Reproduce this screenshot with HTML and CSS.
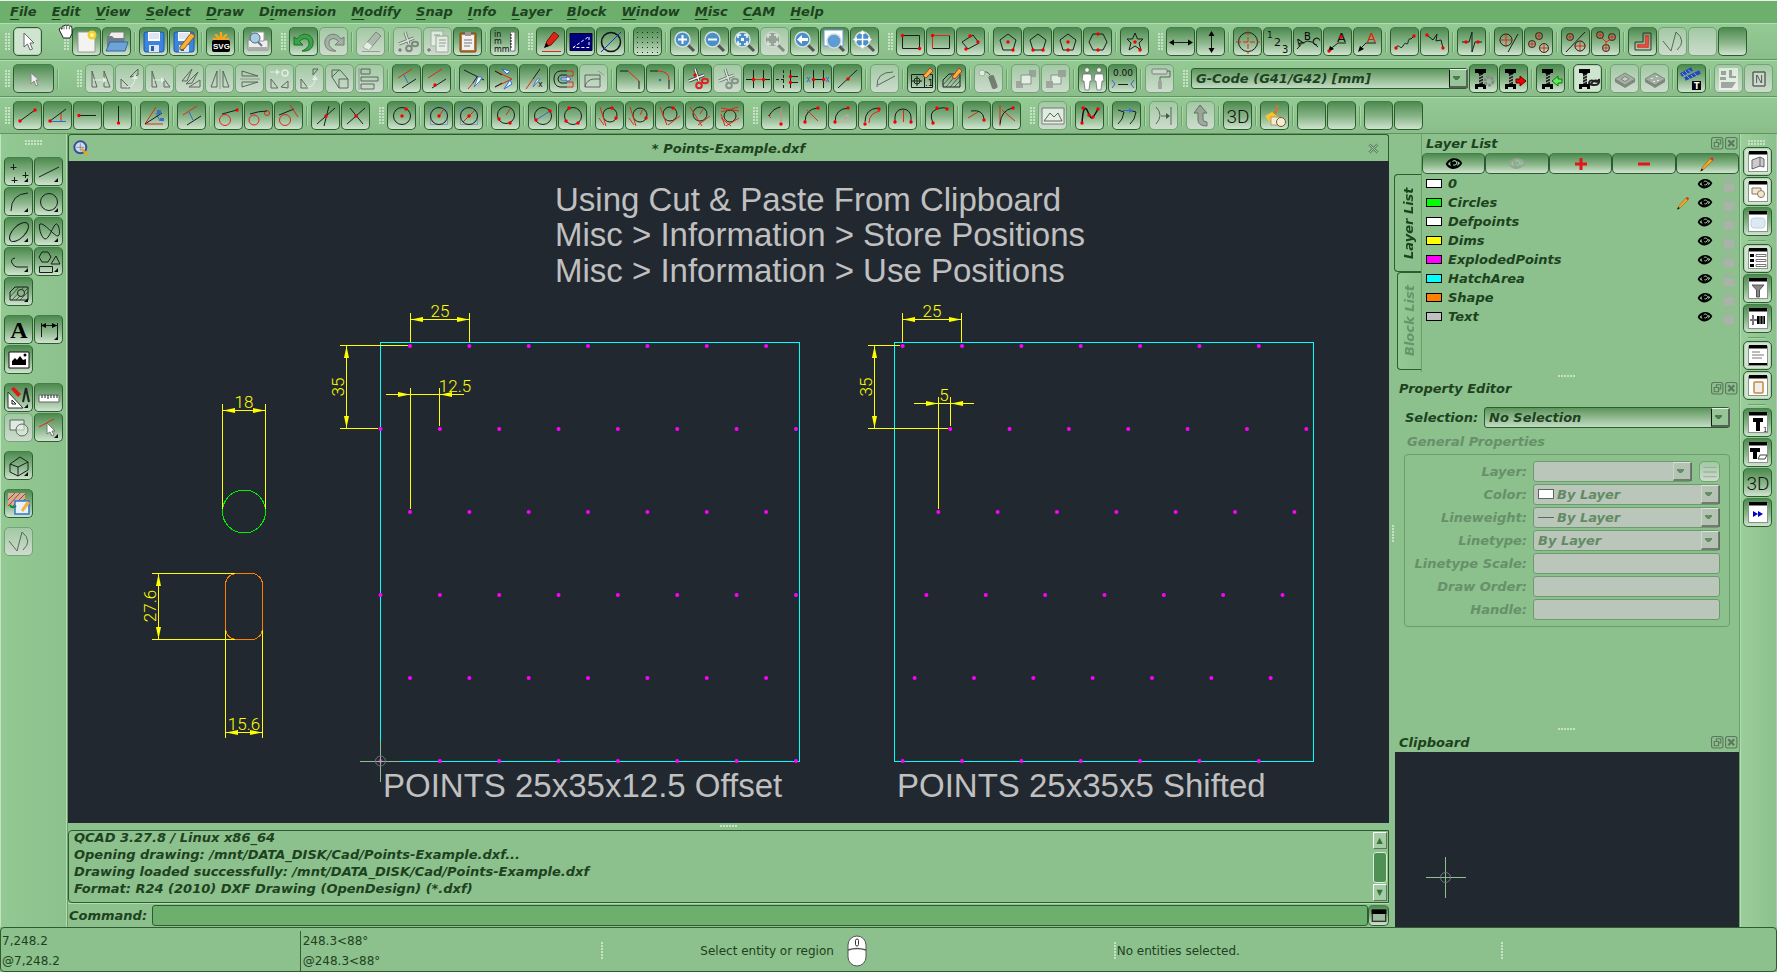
FILE: index.html
```html
<!DOCTYPE html>
<html lang="en">
<head>
<meta charset="utf-8">
<title>Points-Example.dxf - QCAD</title>
<link rel="stylesheet" href="styles.css">
</head>
<body>
<div class="app">
  <nav class="menubar">
    <a href="#"><u>F</u>ile</a><a href="#"><u>E</u>dit</a><a href="#"><u>V</u>iew</a><a href="#"><u>S</u>elect</a><a href="#"><u>D</u>raw</a><a href="#">D<u>i</u>mension</a><a href="#"><u>M</u>odify</a><a href="#"><u>S</u>nap</a><a href="#"><u>I</u>nfo</a><a href="#"><u>L</u>ayer</a><a href="#"><u>B</u>lock</a><a href="#"><u>W</u>indow</a><a href="#"><u>M</u>isc</a><a href="#"><u>C</u>AM</a><a href="#"><u>H</u>elp</a>
  </nav>
  <div class="toolbar" data-tools="# cursor= ## new open | save saveas | svg | print # undo redo! | eraser! | cut! copy! paste | units # pencil draft diameter | grid | zoomin zoomout zoomauto zoomsel! zoomprev zoomwin zoompan # rect1 rect2 rect3 | pent1 pent2 pent3 hexa | star # dimh dimv | center numbers textpath leader1 leader2 | poly1 poly2 | pulse | cross1 cross2 | cross3 cross4 | lshape vpath! blank! blank"></div>
  <div class="toolbar">
    <div class="tools" data-tools="# pick^ | ## mv1! rot1! mv2! fan! mirrorv! mirrorh! mrot! rot2! proj! align! | par1 par2 | trim1 trim2 trim3 offset scale! | bevel round | snip snip2! break1 break2 break3 divide | revarc! | edittext edithatch | explode! | front! back! | people decimals | roller! #"></div>
    <div class="combo combo-main"><select aria-label="Output format"><option>G-Code (G41/G42) [mm]</option></select></div>
    <div class="tools" data-tools="camgear camout | camin | camtool= | plate! plate2! | toolpath | sheet! nest!"></div>
  </div>
  <div class="toolbar" data-tools="# ln1 ln2 ln3 ln4 | bisect | par1 | tan1 tan2 tan3 | orth1 orth2 # ci1 | ci2 ci3 | ci4 | ci5 ci6 | tc1 tc2 tc3 tc4 tc5 # arc0 | arc1 arc2 arc3 arc4 | arc5 | arc6 arc7 # image! | spline | convert | mirror! | up! | three | clean | blank blank | blank blank"></div>

  <main class="body">
    <aside class="palette">
      <i class="grip-h"></i>
      <div class="pair" data-tools="pts, line, arc, circle, ellipse, bow, pline, shapes, hatch,"></div>
      <div class="pair" data-tools="text dimension, picture"></div>
      <div class="pair" data-tools="draw, measure order! select,"></div>
      <div class="pair" data-tools="cube,"></div>
      <div class="pair" data-tools="hatchsave"></div>
      <div class="pair" data-tools="vpath!"></div>
    </aside>

    <section class="document">
      <header class="doc-title"><span data-icon="doc"></span><b>* Points-Example.dxf</b><button class="plain" aria-label="Close document" data-icon="xmark"></button></header>
      <svg class="canvas" role="img" aria-label="Drawing">
        <g id="drawing" transform="translate(-68 -161)">
          <g class="title">
            <text x="555" y="211">Using Cut &amp; Paste From Clipboard</text>
            <text x="555" y="246">Misc &gt; Information &gt; Store Positions</text>
            <text x="555" y="282">Misc &gt; Information &gt; Use Positions</text>
            <text x="383" y="797">POINTS 25x35x12.5 Offset</text>
            <text x="897" y="797">POINTS 25x35x5 Shifted</text>
          </g>
          <path class="area" d="M380.5 342.5H799.5V761.5H380.5ZM894.5 342.5H1313.5V761.5H894.5Z"/>
          <circle class="hole" cx="244" cy="511.500" r="21.5"/>
          <rect class="slot" x="225.5" y="573.5" width="37" height="66" rx="11"/>
          <path class="dim" d="M222.5 404V509M265.5 404V509M222 410.5H265M152 573.5H235M152 639.5H235M158.5 573V639M225.5 630V738M262.5 630V738M225 732.5H262
            M410.5 313V342M469.5 313V342M410 319.5H469M340 345.5H408M340 428.5H378M346.5 346V428M386 394.5H464M410.5 388V509M439.5 388V426
            M902.5 313V342M961.5 313V342M902 319.5H961M868 345.5H900M868 428.5H948M874.5 346V428M914 403.5H974M938.5 397V509M950.5 397V426"/>
          <g id="arrows" class="arrow"></g>
          <g class="dimtext">
            <text x="244" y="408">18</text><text x="244" y="730">15.6</text>
            <text x="440" y="317">25</text><text x="455" y="392">12.5</text>
            <text x="932" y="317">25</text><text x="944" y="401">5</text>
            <text transform="translate(156 606) rotate(-90)">27.6</text>
            <text transform="translate(344 387) rotate(-90)">35</text>
            <text transform="translate(872 387) rotate(-90)">35</text>
          </g>
          <g id="points" class="point"></g>
          <path class="bgline" d="M381 761.5H401M380.5 742V761"/>
          <path class="axis" d="M360 761.5H401M380.5 741V782"/>
          <circle class="origin" cx="380.5" cy="761" r="5"/>
        </g>
      </svg>
      <i class="splitter"></i>
      <div class="log">
        <p>QCAD 3.27.8 / Linux x86_64<br>Opening drawing: /mnt/DATA_DISK/Cad/Points-Example.dxf...<br>Drawing loaded successfully: /mnt/DATA_DISK/Cad/Points-Example.dxf<br>Format: R24 (2010) DXF Drawing (OpenDesign) (*.dxf)</p>
        <div class="scrollbar"><button aria-label="Scroll up">▲</button><span class="thumb"></span><button aria-label="Scroll down">▼</button></div>
      </div>
      <div class="command"><label for="cmd">Command:</label><input id="cmd" type="text"><button class="tool small" aria-label="Toggle command window" data-icon="cmdwin"></button></div>
    </section>

    <aside class="docks">
      <section class="layers">
        <div class="tabs"><button class="tab active">Layer List</button><button class="tab">Block List</button></div>
        <div class="layer-panel">
          <header class="dock-title"><b>Layer List</b><button class="plain" aria-label="Float" data-icon="float"></button><button class="plain" aria-label="Close" data-icon="close"></button></header>
          <div class="layer-tools">
            <button class="tool" aria-label="Show all layers" data-icon="eye"></button><button class="tool" aria-label="Hide all layers" data-icon="eyegrey"></button><button class="tool" aria-label="Add layer" data-icon="plus"></button><button class="tool" aria-label="Remove layer" data-icon="minus"></button><button class="tool" aria-label="Edit layer" data-icon="crayon"></button>
          </div>
          <ul class="layer-list" id="layers"></ul>
        </div>
      </section>
      <i class="splitter dock-split"></i>
      <section class="properties">
        <header class="dock-title"><b>Property Editor</b><button class="plain" aria-label="Float" data-icon="float"></button><button class="plain" aria-label="Close" data-icon="close"></button></header>
        <div class="selection"><label for="sel">Selection:</label><div class="combo"><select id="sel"><option>No Selection</option></select></div></div>
        <fieldset disabled>
          <legend>General Properties</legend>
          <div class="fields">
            <label for="f1">Layer:</label><div class="with-button"><div class="combo off"><select id="f1"><option></option></select></div><button class="tool small" aria-label="Layer menu" data-icon="lines"></button></div>
            <label for="f2">Color:</label><div class="combo off lead"><i class="swatch"></i><select id="f2"><option>By Layer</option></select></div>
            <label for="f3">Lineweight:</label><div class="combo off lead"><i class="stroke"></i><select id="f3"><option>By Layer</option></select></div>
            <label for="f4">Linetype:</label><div class="combo off"><select id="f4"><option>By Layer</option></select></div>
            <label for="f5">Linetype Scale:</label><input id="f5" type="text">
            <label for="f6">Draw Order:</label><input id="f6" type="text">
            <label for="f7">Handle:</label><input id="f7" type="text">
          </div>
        </fieldset>
        <i class="grip-v side"></i>
      </section>
      <i class="splitter dock-split"></i>
      <section class="clipboard">
        <header class="dock-title"><b>Clipboard</b><button class="plain" aria-label="Float" data-icon="float"></button><button class="plain" aria-label="Close" data-icon="close"></button></header>
        <svg class="clip-view" role="img" aria-label="Clipboard preview"><path class="axis" d="M31 125.5H71M50.5 105V146"/><circle class="origin" cx="50.5" cy="125.5" r="5"/></svg>
      </section>
    </aside>

    <aside class="windows">
      <i class="grip-h"></i>
      <div class="stack" data-tools="w-lib= w-block= w-clip | w-list= w-funnel w-bolt | w-text= w-paste= | w-cam1 w-cam2 three w-next"></div>
    </aside>
  </main>

  <footer class="status">
    <div class="coords"><span>7,248.2</span><span>@7,248.2</span></div>
    <div class="coords polar"><span>248.3&lt;88°</span><span>@248.3&lt;88°</span></div>
    <div class="hint"><i class="grip-v"></i><span>Select entity or region</span><span data-icon="mouse"></span></div>
    <div class="cell"><i class="grip-v"></i><span>No entities selected.</span></div>
    <div class="cell"><i class="grip-v"></i></div>
  </footer>
  <span class="hand" data-icon="hand"></span>
</div>
<script src="app.js"></script>
</body>
</html>
```

FILE: styles.css
```css
* { box-sizing: border-box; }
body {
  margin: 0;
  background: #8cc08c;
  color: #1d4220;
  font: italic bold 13px/17px "DejaVu Sans", sans-serif;
}
button, select, input { font: inherit; color: inherit; margin: 0; }
button { padding: 0; }
a { color: inherit; text-decoration: none; }
i { font-style: normal; }

.app {
  position: relative;
  display: grid;
  grid-template-rows: 23px 37px 37px 37px minmax(0, 1fr) 45px;
  height: 100vh;
  overflow: hidden;
}

.menubar {
  display: flex;
  align-items: flex-start;
  padding: 2px 0 0 2px;
  background: #6db06d;
  border-top: 1px solid #e9f3e9;
}
.menubar a { padding: 0 7px 0 8px; }
.menubar u { text-underline-offset: 3px; text-decoration-thickness: 1px; }

/* toolbars */
.toolbar {
  display: flex;
  align-items: flex-start;
  padding-top: 3px;
  border-top: 1px solid #b2dcb2;
  border-bottom: 1px solid #5f955f;
  background: linear-gradient(#94ca94, #8abd8a);
}
.tools { display: flex; }
.tool {
  display: flex;
  flex: none;
  align-items: center;
  justify-content: center;
  width: 29px;
  height: 29px;
  margin-right: 1px;
  position: relative;
  border: 1px solid #2c5c30;
  border-top-color: #43804a;
  border-radius: 5px;
  background: linear-gradient(#4d8a4f, #8ab68a 55%, #cfe3cf);
}
.tool svg { width: 24px; height: 24px; flex: none; overflow: visible; }
.tool.checked { background: #d0e5d0; border-color: #2c5c30; box-shadow: inset 0 0 0 1px #b4cfb4; }
.tool:disabled { background: linear-gradient(#a2c9a3, #cddccd); border-color: #74a377; }
.tool:disabled svg { filter: grayscale(1); opacity: .6; }
.tool.wide { width: 41px; background: linear-gradient(#4d8a4f, #b9d4b9); }
.tool.flyout::after {
  content: "";
  position: absolute;
  right: 4px;
  bottom: 3px;
  border: 2px solid #0a0f0a;
  border-left-color: transparent;
  border-top-color: transparent;
}
.sep { flex: none; width: 7px; height: 20px; margin-top: 5px; background: linear-gradient(90deg, #6da26d 1px, #a9d5a9 1px 2px, transparent 2px) 2px 0 no-repeat; }
.grip { flex: none; width: 16px; height: 29px; padding: 6px 0 0 8px; }
.grip::before, .grip-h::before, .grip-v::before {
  content: "";
  display: block;
  width: 6px;
  height: 18px;
  background: radial-gradient(circle at 1px 1px, #c8e2c8 1px, transparent 1px) 0 0 / 3px 3px;
}
.grip:first-child { width: 13px; padding-left: 5px; }
.grip.far { width: 29px; padding-left: 21px; }
.tools .sep + .grip.far { width: 23px; padding-left: 15px; }
.tools .grip:last-child { width: 16px; }

.k { stroke: #15201a; fill: none; }
.r { stroke: #e02818; fill: none; }
.b { stroke: #3565d8; fill: none; }
.g { stroke: #777; fill: none; }
.w { stroke: #fff; fill: none; }
.K { fill: #000; } .R { fill: #e01010; } .B { fill: #3b6fc9; } .G { fill: #888; } .W { fill: #fff; }
.dot { fill: #f40000; }
.it { fill: #111; font: 9px "DejaVu Sans", sans-serif; }

/* combo boxes and text fields */
.combo { position: relative; min-width: 0; height: 21px; }
.combo select {
  appearance: none;
  display: block;
  width: 100%;
  height: 100%;
  padding: 0 16px 0 4px;
  border: 1px solid #2c5c30;
  border-radius: 3px;
  background: linear-gradient(#5c955c, #c3dcc3);
}
.combo::after {
  content: "";
  position: absolute;
  right: 0;
  top: 1px;
  bottom: 1px;
  width: 16px;
  border: 2px solid #5a615a;
  border-top: 1px solid #e8f0e8;
  border-left: 1px solid #101510;
  background: linear-gradient(#4b7c4b, #4b7c4b) 3px 6px / 7px 2px no-repeat, linear-gradient(#4b7c4b, #4b7c4b) 4px 8px / 5px 1px no-repeat, linear-gradient(#4b7c4b, #4b7c4b) 5px 9px / 3px 1px no-repeat, #97c597;
  pointer-events: none;
}
.combo-main { width: 277px; margin: 4px 1px 0 0; height: 21px; }
.toolbar .combo-main { flex: 0 0 277px; }
.combo.off select, fieldset input { background: #bac6ba; border: 1px solid #6e9a70; border-radius: 3px; opacity: 1; color: #628a64; }
.combo.off::after { background-color: #b4c3b4; border-left-color: #d4ddd4; opacity: .75; }
.combo.lead select { padding-left: 23px; }
.combo .swatch { position: absolute; left: 5px; top: 5px; width: 16px; height: 10px; background: #fff; border: 1px solid #5c685c; }
.combo .stroke { position: absolute; left: 5px; top: 10px; width: 16px; height: 1px; background: #5c685c; }

/* body */
.body { display: grid; grid-template-columns: 68px minmax(0, 1fr) 351px 37px; min-height: 0; }
.palette { padding: 6px 3px 6px 4px; border-right: 1px solid #6a9f6a; box-shadow: inset -1px 0 #b2dcb2, inset 1px 0 #c2e2c2; background: linear-gradient(90deg, #93c993, #8cc08c); }
.grip-h { display: block; height: 6px; }
.grip-h::before { width: 18px; height: 6px; margin: 0 auto; }
.palette .pair { display: flex; flex-wrap: wrap; padding-top: 8px; }
.palette .tool { margin-bottom: 1px; }
.palette .pair:first-of-type { padding-top: 0; margin-top: 11px; }

.document { display: flex; flex-direction: column; min-width: 0; min-height: 0; }
.doc-title { display: flex; align-items: center; justify-content: space-between; height: 27px; padding: 0 6px 0 4px; border: 1px solid #2c5c30; border-width: 1px 1px 0; border-radius: 3px 3px 0 0; }
.doc-title svg { display: block; width: 16px; height: 16px; }
.plain { border: 0; background: none; width: 14px; height: 14px; }
.plain svg { display: block; width: 13px; height: 13px; }
.doc-title .plain svg { width: 11px; height: 11px; }
.canvas { flex: 1; min-height: 0; width: 100%; background: #222830; }
.title text { font: 33px "Liberation Sans", sans-serif; fill: #c0c0c0; }
.area { fill: none; stroke: #00ffff; shape-rendering: crispEdges; }
.hole { fill: none; stroke: #00f000; shape-rendering: crispEdges; }
.slot { fill: none; stroke: #ff7f00; shape-rendering: crispEdges; }
.dim { fill: none; stroke: #ffff00; shape-rendering: crispEdges; }
.arrow { fill: #ffff00; }
.point { fill: #ff00ff; }
.dimtext text { fill: #ffff00; font: 300 17px Roboto, "Liberation Sans", sans-serif; text-anchor: middle; }
.bgline { stroke: #222830; fill: none; }
.axis { stroke: #8cc08c; fill: none; shape-rendering: crispEdges; }
.origin { stroke: #70757a; fill: none; }

.splitter { display: flex; flex: none; justify-content: center; align-items: center; height: 7px; }
.splitter::before { content: ""; width: 18px; height: 3px; background: radial-gradient(circle at 1px 1px, #c8e2c8 1px, transparent 1px) 0 0 / 3px 3px; }
.log { display: flex; flex: none; justify-content: space-between; height: 73px; border: 1px solid #2c5c30; border-radius: 4px 0 0 4px; }
.log p { margin: -2px 0 0; padding-left: 5px; }
.scrollbar { display: flex; flex-direction: column; align-items: center; width: 16px; padding: 1px 1px 1px 0; }
.scrollbar button { width: 14px; height: 17px; flex: none; border: 1px solid #667066; border-top-color: #fff; border-left-color: #fff; background: #a3cda3; color: #3f6b40; font: 8px/12px "DejaVu Sans", sans-serif; }
.thumb { width: 14px; height: 31px; margin: auto 0 1px; border: 1px solid #dcecdc; border-radius: 3px; background: #4f9154; }
.command { display: flex; flex: none; align-items: center; height: 24px; border-top: 1px solid #b2dcb2; }
.command label { padding: 0 5px 0 1px; }
.command input { flex: 1; min-width: 0; height: 21px; border: 1px solid #2c5c30; border-radius: 3px; background: #6db06d; }
.tool.small { width: 21px; height: 21px; margin: 0; }
.tool.small svg { width: 16px; height: 16px; }

/* docks */
.docks { display: flex; flex-direction: column; min-height: 0; padding-left: 6px; border-right: 1px solid #6a9f6a; }
.layers { display: flex; height: 238px; flex: none; }
.tabs { display: flex; flex-direction: column; align-items: flex-end; width: 27px; padding-top: 40px; border-right: 1px solid #6a9f6a; }
.tab {
  width: 24px;
  height: 98px;
  flex: none;
  border: 1px solid #2c5c30;
  border-width: 1px 1px 1px 0;
  border-radius: 0 4px 4px 0;
  background: linear-gradient(270deg, #93c993, #8cc08c);
  writing-mode: vertical-rl;
  transform: rotate(180deg);
  color: #67956a;
}
.tab.active { width: 27px; color: #1d4220; background: #8cc08c; }
.layer-panel { flex: 1; min-width: 0; }
.dock-title { display: flex; align-items: center; height: 19px; padding-left: 4px; }
.dock-title b { flex: 1; }
.layer-tools { display: flex; }
.layer-tools .tool { flex: 1; width: auto; height: 21px; margin-right: 0; }
.layer-tools svg { width: 18px; height: 18px; }
.layer-list { list-style: none; margin: 0; padding: 0; }
.layer-list li { display: grid; grid-template-columns: 22px 1fr 22px 24px 18px; align-items: center; height: 19px; padding-left: 4px; }
.layer-list svg { display: block; width: 16px; height: 16px; }
.layer-list i { width: 16px; height: 9px; border: 1px solid #000; }
.dock-split { height: 8px; }
.properties { position: relative; flex: 1; min-height: 0; }
.properties .dock-title { height: 17px; }
.selection { display: grid; grid-template-columns: 79px 1fr; align-items: center; padding: 10px 9px 0 10px; }
fieldset { margin: 26px 9px 0; padding: 6px 9px; border: 1px solid #6e9a70; border-radius: 4px; color: #67906a; }
fieldset legend { float: left; width: 100%; height: 0; margin-top: -28px; padding: 0; text-indent: -7px; overflow: visible; }
.fields { clear: both; display: grid; grid-template-columns: 113px 1fr; column-gap: 6px; row-gap: 2px; align-items: center; text-align: right; }
.fields input { width: 100%; height: 21px; }
.with-button { display: grid; grid-template-columns: 1fr 21px; gap: 7px; }
.grip-v::before { width: 3px; height: 18px; }
.side { position: absolute; left: -3px; top: 145px; }
.clipboard { display: flex; flex-direction: column; height: 194px; flex: none; }
.clip-view { flex: 1; width: 100%; min-height: 0; background: #222830; }

.windows { padding: 6px 0 0 2px; background: linear-gradient(90deg, #9acd9a, #8cc08c); border-left: 1px solid #b2dcb2; border-right: 1px solid #b8c4b8; }
.windows .grip-h { margin: 0 6px 0 0; }
.stack { display: flex; flex-direction: column; margin-top: 1px; }
.stack .tool { margin: 0 0 1px; }
.stack .sep { width: 18px; height: 7px; margin: 0 0 0 5px; background: linear-gradient(#6da26d 1px, #a9d5a9 1px 2px, transparent 2px) 0 3px no-repeat; }

/* status bar */
.status { display: grid; grid-template-columns: 300fr 301fr 513fr 388fr 275fr; padding: 3px 0 1px; border: 1px solid #2c5c30; border-radius: 4px; font: 12px/20px "DejaVu Sans", sans-serif; }
.coords { display: flex; flex-direction: column; padding-left: 1px; border-right: 1px solid #2f5f32; }
.coords.polar { border: 0; padding-left: 2px; }
.hint, .cell { display: flex; align-items: center; }
.hint .grip-v { margin-right: 96px; }
.hint svg { display: block; width: 24px; height: 24px; margin-left: 11px; overflow: visible; }
.hand { position: absolute; left: 57px; top: 24px; }
.hand svg { display: block; width: 18px; height: 16px; }
```

FILE: app.js
```js
// Icon shorthand: items split by ";". Lower-case k r b g w are stroked paths, upper-case are
// filled ones, o = red dots, c / e = black / red circle, t = text, "<" = plain markup.
const lens = (s) => 'g M14 14L21 21;<path d="M15 15l6 6" stroke="#555" stroke-width="3"/>;<circle cx="9.500" cy="9.500" r="7.500" fill="#4a8fc8" stroke="#d6e0e0" stroke-width="1.500"/>;' + s;
const win = (s) => '<rect x="2.500" y="2.500" width="19" height="19" fill="#fff" stroke="#8a968a"/>;K M3 1H21V4.500H3Z;' + s;
const cam = 'K M3 2H14V6H12L11 7H7L6 6H3ZM3 17H14V22H11V20H6V22H3Z;<path d="M7 7h4v10H7z" fill="#222"/>;<path d="M7 10l4-2M7 13l4-2M7 16l4-2" stroke="#bbb"/>;';
const tri = 'k M4 4V20H9Z;';
const clip = '<rect x="4" y="3" width="16" height="19" rx="1" fill="#b5783a" stroke="#774410"/>;<path d="M6 5h12v15H6z" fill="#f2f2f2"/>;<path d="M9 2h6v4H9z" fill="#999"/>;g M8 10H16M8 13H16M8 16H14';
const crayon = '<path d="M4 21L6 16L17 4L20 7L9 18Z" fill="#f5a623" stroke="#8a5a12" stroke-width=".8"/>;<path d="M16 5l3 3 2-3-2-2z" fill="#e03020"/>;K M3 22L5 18L7 20Z';
const floppy = '<rect x="2" y="2" width="20" height="20" rx="2" fill="#3d84dd" stroke="#1d57a8"/>;<path d="M6 2h12v9H6z" fill="#fff"/>;<path d="M7 4h10M7 6h10M7 8h10" stroke="#b8ccea"/>;<path d="M7 15h10v7H7z" fill="#dce6f2"/>;<path d="M9 16h3v5H9z" fill="#2a5ea8"/>;';
const scissors = (c) => `<path d="M9 2L13 14M3 14L18 8" stroke="#333" stroke-width="3"/>;<path d="M9 2L13 14M3 14L18 8" stroke="#eee" stroke-width="1.500"/>;<g fill="none" stroke="${c}" stroke-width="2"><circle cx="13" cy="18.500" r="2.800"/><ellipse cx="19" cy="14" rx="3" ry="2.300"/></g>`;
const eye = (c) => `<path d="M1 12C5 2 19 2 23 11C18 21 5 21 1 12Z" fill="${c}"/>;<path d="M4 12C7 7 16 6 20 11C16 17 7 16 4 12Z" fill="#9cc89c"/>;<circle cx="12" cy="11" r="5" fill="${c}"/>;<path d="M10 9a3 3 0 1 1 1 4" fill="none" stroke="#9cc89c" stroke-width="1.500"/>`;
const plate = '<path d="M2 12L12 6L22 12L12 18Z" fill="#999" stroke="#555"/>;<path d="M2 12V15L12 21L22 15V12L12 18Z" fill="#555"/>;';
const icons = {
  blank: '',
  cursor: '<path d="M8 3V17L11.500 14L14 20L16.500 19L14 13H18Z" fill="#fff" stroke="#666"/>',
  pick: '<path d="M9 6V17L12 14L14 19L16 18L14 13H17Z" fill="#eee" stroke="#888"/>',
  new: '<path d="M3 2H20V22H3Z" fill="#f3f3ef" stroke="#999"/>;<circle cx="17" cy="5" r="4.500" fill="#f2cf2c"/>;<circle cx="17" cy="5" r="2" fill="#fff6a0"/>',
  open: '<path d="M3 7L6 2H19V14H5Z" fill="#eee" stroke="#777"/>;<path d="M2 6H7L9 8H19V20H2Z" fill="#6d7f8c"/>;<path d="M1 21L5 12H23L20 21Z" fill="#6ea3d8" stroke="#34699f"/>',
  save: floppy,
  saveas: floppy + '<path d="M8 17L19 3L23 6L12 19L8 20Z" fill="#f5b13a" stroke="#8a5a12"/>',
  svg: '<g stroke="#f9a51a" stroke-width="2.500" stroke-linecap="round"><path d="M12 11V3M12 11L7 5M12 11L17 5M12 11L5 9M12 11L19 9"/></g>;<rect x="3" y="10" width="18" height="12" rx="2"/>;<text x="4" y="19" font-size="8" font-weight="bold" font-style="normal" font-family="Liberation Sans" fill="#fff">SVG</text>',
  print: '<path d="M2 10H22V20H2Z" fill="#ededed" stroke="#888"/>;<path d="M6 2H18V11H6Z" fill="#fff" stroke="#999"/>;<path d="M3 17H21V20H3Z" fill="#aaa"/>;<circle cx="9" cy="8" r="5" fill="#a8cde8" stroke="#567"/>;<path d="M12 12l4 4" stroke="#678" stroke-width="2"/>',
  undo: '<path d="M2 7V15H11L7.500 11.500C11 7 17 8 17 13C17 17 14 19 10 21C18 22 22 17 21 11C20 4 10 1 5 9Z" fill="#3aa346" stroke="#1f6d2b"/>',
  redo: '<path d="M22 7V15H13L16.500 11.500C13 7 7 8 7 13C7 17 10 19 14 21C6 22 2 17 3 11C4 4 14 1 19 9Z" fill="#999" stroke="#444"/>',
  eraser: '<path d="M4 17L17 2L22 6L10 20Z" fill="#aaa" stroke="#555"/>;<path d="M4 17L8 12L13 16L10 20Z" fill="#fff"/>;g M3 21.500H21',
  cut: scissors('#555') + ';k M2 20H6M4 18V22',
  copy: '<path d="M5 1H17V16H5Z" fill="#fff" stroke="#999"/>;<path d="M10 6H22V22H10Z" fill="#fff" stroke="#888"/>;g M8 5H14M13 10H20M13 13H20M13 16H19;k M1 20H5M3 18V22',
  paste: clip,
  units: 't 1 7 8 in;t 1 14 8 m;t 1 22 8 mm;<path d="M17.500 2H22V21H17.500Z" fill="#fff" stroke="#777"/>;k M17 5H19M17 8H19M17 11H19M17 14H19M17 17H19',
  pencil: '<path d="M6 17L8 11L15 2L20 6L12 15Z" fill="#dd2418" stroke="#7a0e08"/>;K M5 18L7 13L10 16Z;r M3 21.500H22',
  draft: '<path d="M1 3.500H23V20.500H1Z" fill="#00007d" stroke="#003"/>;<path d="M4 17.500L20 6.500V17.500Z" fill="none" stroke="#fff" stroke-dasharray="3 2"/>',
  diameter: '<circle cx="12" cy="12" r="9.500" fill="none" stroke="#111" stroke-width="1.500"/>;<path d="M2 22L22 2" stroke="#1636c8"/>',
  grid: '<path d="M1 2.500H24M1 7.500H24M1 12.500H24M1 17.500H24M1 22.500H24" stroke="#1c3020" stroke-dasharray="1 4"/>',
  zoomin: lens('<path d="M5 9.500H14M9.500 5V14" stroke="#fff" stroke-width="2"/>'),
  zoomout: lens('<path d="M5 9.500H14" stroke="#fff" stroke-width="2"/>'),
  zoomauto: lens('<path d="M5 8V5H8M11 5H14V8M14 11V14H11M8 14H5V11" stroke="#fff" stroke-width="1.500" fill="none"/>;W M8 8H11V11H8Z'),
  zoomsel: lens('<path d="M5 8V5H8M11 5H14V8M14 11V14H11M8 14H5V11" stroke="#fff" stroke-width="1.500" fill="none"/>'),
  zoomprev: lens('W M4 9.500L9 5V8H15V11H9V14Z'),
  zoomwin: '<path d="M1 0H20V16H1Z" fill="#fff" stroke="#6d94d8"/>;<path d="M16 16l5 5" stroke="#555" stroke-width="3"/>;<circle cx="11" cy="11" r="7" fill="#5f9bd6" stroke="#cdd" stroke-width="1.500"/>',
  zoompan: lens('W M9.500 0L12 4H7ZM9.500 19L12 15H7ZM0 9.500L4 7V12ZM19 9.500L15 7V12Z;<path d="M9.500 3V16M3 9.500H16" stroke="#fff" stroke-width="1.500"/>'),
  rect1: 'k M3.500 5.500H20.500V18.500H3.500Z;o 3.500 5.500 20.500 18.500', rect2: 'k M20.500 5.500V18.500H3.500;r M3.500 18.500V5.500H20.500;o 3.500 5.500', rect3: 'k M3 12L14 5L20 13L9 19Z;o 11 6 19 12 7 19',
  pent1: 'k M12 4L20 10L17 20H7L4 10Z;o 12 12 17 20', pent2: 'k M12 4L20 10L17 20H7L4 10Z;o 7 20 17 20', pent3: 'k M12 4L20 10L17 20H7L4 10Z;o 12 12 12 20', hexa: 'k M7 4H17L21 12L17 20H7L3 12Z;o 12 4 12 20',
  star: 'k M12 3L14.500 9H20L16 13L18 20L12 16L6 20L8 13L4 9H9.500Z;o 12 12 17 20',
  dimh: 'k M3 12.500H21;K M0 12.500L5 9.500V15.500ZM24 12.500L19 9.500V15.500Z', dimv: 'k M12.500 3V21;K M12.500 1L9.500 6H15.500ZM12.500 23L9.500 18H15.500Z',
  center: 'c 12 12 9.500;<path d="M12 0V24M0 12H24" stroke="#e02818" stroke-dasharray="5 2"/>',
  numbers: 't 1 8 9 1;t 8 16 11 2;t 16 23 10 3', textpath: '<g font-family="DejaVu Sans" font-size="10" font-weight="normal" font-style="normal"><text x="8" y="10">B</text><text transform="translate(3 17) rotate(-35)">A</text><text transform="translate(15 12) rotate(35)">C</text></g>;k M1 19Q11 4 22 17',
  leader1: '<text x="11" y="12" font-size="13" font-weight="normal" font-style="normal" font-family="DejaVu Sans" fill="#111">A</text>;k M3 20L12 13H20;K M2 22L4 16L8 19Z;o 3 21 15 7', leader2: '<text x="11" y="12" font-size="13" font-weight="normal" font-style="normal" font-family="DejaVu Sans" fill="#e02010">A</text>;k M3 20L10 13H20;K M2 22L4 16L8 19Z',
  poly1: 'k M3 18C6 12 7 21 10 16S12 14 14 14S14 8 18 9L21 6;o 3 18 21 6', poly2: 'k M4 5L10 10L14 4L13 11L18 10L20 18;o 4 5 20 18',
  pulse: 'k M2 12H9L12 2V22L15 12H22;o 6 12 18 12', cross1: 'c 9 10 6;r M2 10H16M9 3V17;k M11 22L21 4', cross2: 'c 12 6 3.500;c 5 14 3.500;c 17 18 4.500;r M8 6H16M12 2V10M1 14H9M5 10V18M12 18H22M17 13V23',
  cross3: 'c 6 7 3.500;c 16 16 5;r M2 7H10M6 3V11M10 16H22M16 10V22;k M2 22L21 2', cross4: 'c 6 5 3.500;c 18 7 3.500;c 12 18 3.500;r M2 5H10M6 1V9M14 7H22M18 3V11M8 18H16M12 14V22M7 7L12 12L17 9M12 12V15',
  lshape: '<path d="M12 3H20V20H4V12H12Z" fill="none" stroke="#333"/>;<path d="M15 6H17V17H7V15H15Z" fill="#bbb" stroke="#e8281c" stroke-width="1.500"/>',
  vpath: 'k M2 11L10 21L15 2Q26 11 16 20',
  mv1: tri + 'k M16 4V20H22Z;w M5 13H15;W M15 10L19 13L15 16Z', rot1: 'k M3 12V21H12ZM12 10L20 2V8Z;w M9 20Q17 20 17 10;W M14 12L17 7L20 12Z', mv2: tri + 'k M16 12V20H22Z;w M5 13H13;W M13 10L17 13L13 16Z',
  fan: 'k M4 14L14 2L9 14ZM8 17L20 5L14 16ZM11 20L22 13V20Z', mirrorv: 'k M9 4V20H3ZM15 4V20H21Z;g M12 2V22', mirrorh: 'k M4 4V9L20 9ZM4 20V15H20Z;g M2 12H22', mrot: 'k M3 12V21H10ZM13 20L20 14V21Z;w M2 5H8;<circle cx="17" cy="6" r="3" fill="none" stroke="#fff" stroke-width="1.500"/>;W M8 2L12 5L8 8Z',
  rot2: 'k M3 12V21H10ZM15 2V8L20 2Z;w M9 20Q17 20 17 11;W M14 13L17 8L20 13Z', proj: 'k M4 10V3H12L20 12V21M4 10L11 21V12H20M4 10L11 3M11 21H20', align: 'k M3 2H12V7H3ZM3 10H20V14H3ZM3 17H16V22H3Z;g M1 1V23',
  par1: 'r M3 11L17 2;k M7 21L21 12;b M9 8L13 16', par2: 'r M3 11L17 2;k M7 21L21 12;o 10 18',
  trim1: 'k M2 3L22 13;k M15 10L11 16;r M11 16L6 22;<path d="M12 20L16 10H20L18 14Z" fill="#fff" stroke="#4a78d0"/>', trim2: 'r M3 4L20 12L3 20;k M3 4L10 8M3 20L10 16;<path d="M10 2L18 4L15 7ZM12 22L18 13L20 17Z" fill="#dff" stroke="#3565d8"/>', trim3: 'k M18 2L11 12;r M11 12L4 22;<path d="M11 20L15 12H18Z" fill="#fff" stroke="#4a78d0"/>;t 16 20 8 x',
  offset: 'k M15 4H8Q2 5 2 12T8 20H15M15 8H9Q6 9 6 12T9 16H15;r M15 4H21V9H15M15 15H21V20H15;<path d="M9 11H15V9L19 12L15 15V13H9Z" fill="#fff" stroke="#3565d8"/>', scale: 'k M3 8H18V20H3ZM3 20A9 9 0 0 1 12 12H18;g M16 4L22 8',
  bevel: 'k M1 4H9M20 14V22;r M9 4L20 14', round: 'k M1 4H9M20 13V22;r M9 4Q20 4 20 13;<circle cx="11" cy="13" r="1.200" fill="#36c"/>',
  snip: scissors('#d22') + ';o 9 8', snip2: scissors('#666'), break1: 'k M7.500 3V21M17.500 3V21M0 12.500H24;r M8 12.500H17;o 7.500 12.500 17.500 12.500', break2: '<path d="M7.500 3V21M0 12.500H8" stroke="#222" stroke-dasharray="3 2"/>;k M14.500 3V21M14 9.500H22M14 15.500H22;o 14.500 9.500 14.500 15.500', break3: 'k M7.500 3V21M17.500 3V21M7 12.500H17;o 7.500 12.500 17.500 12.500;b M1 10L4 15M4 10L1 15M20 10L23 15M23 10L20 15', divide: 'k M2 21L21 3;o 12 12',
  revarc: 'k M4 20Q3 5 20 5M5 18L22 9', edittext: 'k M1.500 7.500H22.500V20.500H1.500ZM14.500 8V20;c 7 14 3;k M2 14H12M7 9V19;t 15 19 9 .1;<path d="M13 9L20 1L23 4L16 11Z" fill="#f5b13a" stroke="#b33"/>', edithatch: 'k M3 20V13L9 7H20V20Z;<path d="M3 18L12 8M6 20L16 8M10 20L20 9M14 20L20 14" stroke="#333" stroke-width=".7"/>;<path d="M12 10L19 1L22 4L15 12Z" fill="#f5b13a" stroke="#b33"/>',
  explode: '<rect x="13" y="8" width="6" height="14" rx="2" fill="#444" transform="rotate(-20 16 15)"/>;k M13 8Q10 3 5 6;<circle cx="5" cy="6" r="3" fill="#fff" stroke="#999"/>',
  front: 'G M2 14H9V21H2ZM15 3H22V10H15Z;<path d="M7 8H17V17H7Z" fill="#fff" stroke="#666"/>', back: '<path d="M7 8H17V17H7Z" fill="#fff" stroke="#666"/>;G M2 14H9V21H2ZM14 3H22V10H14Z',
  people: '<g fill="#fff" stroke="#666" stroke-width=".7"><circle cx="6" cy="3" r="2.300"/><path d="M2 7H10L11 14H9L8 23H4L3 14H1Z"/><circle cx="18" cy="3" r="2.300"/><path d="M14 7H22L23 14H21L20 23H16L15 14H13Z"/></g>',
  decimals: 't 2 9 9 0.00;k M7 17.500H17;b M1 13L4 17L1 21M23 13L20 17L23 21', roller: '<rect x="4" y="2" width="15" height="5" rx="1" fill="#ddd" stroke="#555"/>;k M19 4H22V10H12V14;<path d="M10 14H14V22H10Z" fill="#888"/>',
  camgear: cam + '<circle cx="17" cy="14" r="4" fill="none" stroke="#888" stroke-width="3" stroke-dasharray="3 1"/>', camout: cam + '<path d="M14 12H18V9L24 14L18 19V16H14Z" fill="#f00000" stroke="#600"/>', camin: cam + '<path d="M23 12H19V9L13 14L19 19V16H23Z" fill="#5ee85e" stroke="#171"/>', camtool: cam + '<path d="M13 17Q13 12 18 14T23 12Q24 18 19 18T15 17Q18 12 22 14" fill="none" stroke="#222" stroke-width="2"/>',
  plate: plate + '<path d="M8 12L12 9.500L16 12L12 14.500Z" fill="#ccc" stroke="#555"/>', plate2: plate + 'W M8 11h2v1h-2zM13 9h2v1h-2zM14 13h2v1h-2zM10 14h2v1h-2z',
  toolpath: '<path d="M1 8L12 2M5 12L20 5" stroke="#2449b8" stroke-width="4"/>;<path d="M2 6L5 9M5 4L8 7M8 3L11 5M7 9L10 12M11 8L13 10M14 6L17 9" stroke="#7f9be8"/>;K M12 14H21V23H12Z;<text x="14" y="22" font-size="8" font-weight="bold" font-style="normal" font-family="DejaVu Sans" fill="#fff">T</text>',
  sheet: '<path d="M2 1H21V23H2Z" fill="#fff"/>;G M4 4H9V8H4ZM12 3H15V9H19V11H12ZM3 10H9V13H3ZM4 15H19L15 21H4Z', nest: '<path d="M6 5H18V19H6Z" fill="#ddd" stroke="#222"/>;k M6 5V19H18V5Z;t 8 16 11 N',
  ln1: 'k M4 17L19 6;o 4 17 19 6', ln2: 'b M5 17.500H20;r M15 9V17;k M4 17L20 5;o 4 17', ln3: 'k M3 11.500H20;o 3 11.500', ln4: 'k M12.500 2V18;o 12.500 19',
  bisect: 'r M2 20L13 3M2 20H20;b M13 9L17 17;k M2 20L19 9;B M14 6H18V10H14ZM17 14H21V17H17Z', tan1: 'e 8 16 5.500;k M5 10L20 6;o 20 6', tan2: 'e 7 16 5;e 20 9 2.500;k M3 10Q12 7 20 7', tan3: 'e 8 16 5.500;k M2 11L17 5;r M13 1L21 13',
  orth1: 'k M3 20L21 4M15 2L10 22;o 12 12', orth2: 'k M3 20L21 4M6 4L19 20;o 12 12',
  ci1: 'c 12 12 8.500;o 12 12 16 5', ci2: '<path d="M3.500 3.500H20.500V20.500H3.500Z" fill="none" stroke="#6a8acb" stroke-opacity=".7"/>;c 12 12 8.500;r M12 12L17 5;o 12 12', ci3: '<path d="M3.500 3.500H20.500V20.500H3.500Z" fill="none" stroke="#6a8acb" stroke-opacity=".7"/>;c 12 12 8.500;r M6 18L18 6;o 12 12', ci4: 'c 12 11 8.500;r M12 11L16 5;o 5 15 16 19', ci5: 'c 12 12 8.500;b M5 16L19 7;o 5 16 19 7', ci6: 'c 12 12 8.500;o 8 4 5 17 17 19',
  tc1: 'c 12 11 7;r M2 3L8 22M1 14L6 21;o 14 4 18 14', tc2: 'c 12 11 7;r M2 3L8 22M1 14L6 21M12 11L15 5;o 18 14', tc3: 'c 12 10 7;r M2 3L9 21M22 12L10 21;o 15 4', tc4: 'c 12 10 7;r M2 3L14 22M22 12L10 21M12 10L15 5', tc5: 'c 12 12 6;r M3 4L21 7M3 8L20 3M3 14L13 22M21 14L8 22M3 10L7 22',
  arc0: 'r M4 11L7 14;k M5 12Q9 4 17 3;<path d="M17 3V18" stroke="#c88"/>;o 17 20', arc1: 'k M4 18Q4 5 17 4;r M6 6L17 17;o 4 18 17 4', arc2: 'k M4 18Q4 5 17 4;<path d="M5 18H19M10 18Q12 11 17 11V18" fill="none" stroke="#caa"/>;o 4 18 17 4', arc3: 'k M4 18Q4 5 17 4;r M8 19Q8 9 19 7;o 4 20 18 5', arc4: 'k M4 18V13A8 8 0 0 1 20 13V18;r M12.500 6V18;o 4 18 20 18', arc5: 'k M5 19Q0 8 9 5T20 6;o 5 19 9 4 19 5', arc6: 'r M3 14L13 8;k M6 7Q18 5 19 15;o 19 16', arc7: 'r M5 1V22M7 6L20 17;k M5 20Q6 6 18 4;o 18 4',
  image: '<path d="M1 4H23V20H1Z" fill="#fff" stroke="#444"/>;k M3 17L9 9L13 13L17 9L21 17Z', spline: '<path d="M4 19C5 4 7 1 10 8S13 18 20 5" fill="none" stroke="#111" stroke-width="1.500"/>;o 4 19 5 4 11 11 15 13 20 5', convert: 'k M3 6L9 8Q8 16 3 20M14 6L21 8Q20 16 15 20;b M8 6.500H15;B M14 4L18 6.500L14 9Z', mirror: 'k M4 3Q12 11 4 20M19 3V21M9 12H15;K M14 9L18 12L14 15Z', up: '<path d="M11 1L5 9H9V16Q9 22 18 22V18Q14 18 14 15V9H18Z" fill="#888" stroke="#333"/>',
  three: '<text x="12" y="19" text-anchor="middle" font-family="Roboto" font-weight="300" font-style="normal" font-size="19" fill="#111">3D</text>',
  clean: '<path d="M10 10L14 1H16L13 11Z" fill="#c73"/>;<path d="M2 12L9 8L14 12L8 20Z" fill="#f6c52c"/>;<path d="M8 13H17V21H8Z" fill="#f4ecd0" stroke="#a97"/>;<circle cx="18" cy="18" r="4.500" fill="#f4ecd0" stroke="#753"/>',
  pts: 'k M6.500 4V10M3.500 7.500H9.500M18.500 12V18M15.500 15.500H21.500M7.500 17V23M4.500 20.500H10.500', line: 'k M2 17L22 7', arc: 'k M4 21Q4 4 21 3', circle: 'c 12 12 8.500', ellipse: '<ellipse cx="12" cy="12" rx="12" ry="6" transform="rotate(-45 12 12)" fill="none" stroke="#15201a"/>', bow: 'k M3 4C7 2 18 17 21 16S22 3 19 4S12 20 8 19S1 5 3 4Z',
  pline: 'k M8 8Q3 9 5 13T10 17H21', shapes: 'k M5 2H11L14 7L11 12H5L2 7ZM19 6L23 14H14ZM2.500 16.500H15.500V22.500H2.500Z', hatch: 'k M3 20V12L8 7H21V20Z;<path d="M3 17L12 7M5 20L17 7M9 20L21 8M13 20L21 12" stroke="#333" stroke-width=".7"/>;<circle cx="14" cy="13" r="3.500" fill="#8ab68a" stroke="#222"/>',
  text: '<text x="12" y="20" text-anchor="middle" font-family="Liberation Serif" font-weight="bold" font-style="normal" font-size="24">A</text>', dimension: 'k M4.500 19V5M20.500 19V5M4 7.500H20;K M4 7.500L9 5V10ZM20 7.500L15 5V10Z', picture: '<path d="M2 4H22V20H2Z" fill="#fff" stroke="#111"/>;K M5 17V13L8 10L10 12L13 8L16 12L19 11V17Z;<circle cx="18" cy="7" r="1.500"/>',
  draw: '<path d="M1 6V22H16Z" fill="#fff" stroke="#333"/>;k M5 14V18H9Z;<path d="M4 3L7 1L14 8L11 11Z" fill="#e01818"/>;<path d="M19 2L16 16M19 2L22 16" stroke="#222" stroke-width="2"/>', measure: '<path d="M2 9H22V16H2Z" fill="#fff" stroke="#666"/>;k M5 9V12M8 9V12M11 9V13M14 9V12M17 9V12M20 9V12', order: '<path d="M3 4H17V14H3Z" fill="#fff" stroke="#222"/>;<circle cx="15" cy="14" r="6" fill="#fff" fill-opacity=".6" stroke="#222"/>', select: 'r M2 11L17 3;<path d="M10 7V18L13 16L15 20L17 19L15 15H18Z" fill="#fff" stroke="#777"/>',
  cube: 'k M3 10L13 3L21 8V16L11 22L3 18ZM3 10L11 13L21 8M11 13V22', hatchsave: '<path d="M1 1H18V14H1Z" fill="#c9b29a"/>;r M1 8L8 1M1 14L13 1M6 14L18 2M11 14L18 7;<path d="M8 9H22V22H8Z" fill="#e8f0fa" stroke="#2e78d0" stroke-width="1.500"/>;<path d="M14 18L20 9L23 11L16 20Z" fill="#f5b13a"/>;<path d="M3 13Q5 17 9 14" stroke="#183" stroke-width="2" fill="none"/>',
  doc: '<circle cx="11" cy="11" r="9" fill="#cde" stroke="#3a4f94" stroke-width="3"/>;g M11 5V17M5 11H17;<path d="M13 13L22 23" stroke="#f0a020" stroke-width="3.500"/>',
  xmark: '<path d="M3 3L21 21M21 3L3 21" stroke="#5f8562" stroke-width="6"/>;<path d="M3 3L21 21M21 3L3 21" stroke="#a6cfa6" stroke-width="2"/>',
  float: '<rect x="1" y="1" width="21" height="21" rx="4" fill="none" stroke="#5b775d" stroke-width="2"/>;<path d="M10 5H18V13H14V18H6V10H10ZM10 10H14V13" fill="none" stroke="#5b775d" stroke-width="2"/>', close: '<rect x="1" y="1" width="21" height="21" rx="4" fill="none" stroke="#5b775d" stroke-width="2"/>;<path d="M6 6L17 17M17 6L6 17" stroke="#5b775d" stroke-width="4"/>',
  eye: eye('#000'), eyegrey: eye('#92a892'), plus: '<path d="M12 4V20M4 12H20" stroke="#e01818" stroke-width="4"/>', minus: '<path d="M4 12H20" stroke="#e01818" stroke-width="4"/>', crayon,
  lock: '<path d="M7 11V7Q7 2 12 2T17 7V11" fill="none" stroke="#a2b2a2" stroke-width="2.500"/>;<path d="M4 11H20V23H4Z" fill="#aab2aa"/>',
  lines: '<path d="M2 5H22M2 12H22M2 19H22" stroke="#999" stroke-width="2"/>', cmdwin: '<rect x="2" y="4" width="20" height="16" fill="#9cbd9c" stroke="#333" stroke-width="2"/>;K M1 2H23V9H1Z',
  mouse: '<rect x="3" y="-3" width="18" height="30" rx="9" fill="#fff" stroke="#555"/>;<path d="M3 11Q12 8 21 11" fill="none" stroke="#555" stroke-width="1.500"/>;<rect x="10.500" y="0" width="3" height="7" rx="1.500" fill="#fff" stroke="#333"/>',
  hand: '<path d="M2 9Q1 6 4 6L6 8V5Q6 2 9 3Q10 1 13 2Q16 1 17 3Q21 2 21 6V14L18 21H8Z" fill="#fff" stroke="#222" stroke-width="1.500"/>;k M9 4V8M13 3V8M17 4V8',
  'w-lib': win('<path d="M6 10L14 7V16L6 19ZM14 7L18 9V17L14 16" fill="#ccc" stroke="#666"/>'), 'w-block': win('<path d="M6 8H15V14H6Z" fill="#f3e8cc" stroke="#876"/>;<circle cx="15" cy="14" r="3.500" fill="#f3e8cc" stroke="#876"/>'), 'w-clip': win('<rect x="5" y="8" width="14" height="10" rx="3" fill="#dce8f2" stroke="#c2d2e0"/>'),
  'w-list': win('K M4 7H8V10H4ZM4 12H8V15H4ZM4 17H8V20H4Z;g M10 7.500H20V9.500H10ZM10 12.500H20V14.500H10ZM10 17.500H20V19.500H10Z'), 'w-funnel': win('<path d="M6 8H18L13.500 13V20H10.500V13Z" fill="#888" stroke="#555"/>'), 'w-bolt': win('K M11 9H19V17H11Z;<path d="M7 8V18M4 13H11" stroke="#777" stroke-width="2"/>;<path d="M14 9V17M17 9V17" stroke="#aaa"/>'),
  'w-text': win('g M6 8H14M6 11H18M6 14H16;K M3 19H21V21H3Z'), 'w-paste': win('<rect x="8" y="8" width="9" height="11" rx="1" fill="#eee" stroke="#c7893c" stroke-width="1.500"/>'), 'w-cam1': win('K M7 7H17V11H14V20H10V11H7Z;t 17 21 7 1'), 'w-cam2': win('K M4 7H14V11H11V18H7V11H4Z;<path d="M12 18L14 14H21L19 18Z" fill="#fff" stroke="#444"/>'), 'w-next': win('<path d="M7 10L12 13L7 16ZM12 10L17 13L12 16Z" fill="#0000c8"/>'),
};

function svg(name) {
  const parts = (icons[name] || '').split(';').filter(Boolean).map((item) => {
    if (item[0] === '<') return item;
    const op = item[0], rest = item.slice(2), n = rest.split(' ');
    if (op === 'o') return n.map((x, i) => i % 2 ? '' : `<circle class="dot" cx="${x}" cy="${n[i + 1]}" r="1.7"/>`).join('');
    if (op === 'c' || op === 'e') return `<circle class="${op === 'c' ? 'k' : 'r'}" cx="${n[0]}" cy="${n[1]}" r="${n[2]}"/>`;
    if (op === 't') return `<text class="it" x="${n[0]}" y="${n[1]}" style="font-size:${n[2]}px">${n[3]}</text>`;
    return `<path class="${op}" d="${rest}"/>`;
  });
  return `<svg viewBox="0 0 24 24" aria-hidden="true">${parts.join('')}</svg>`;
}

document.querySelectorAll('[data-tools]').forEach((bar) => {
  bar.innerHTML = bar.dataset.tools.split(' ').map((token) => {
    if (token === '|') return '<i class="sep"></i>';
    if (token === '#') return '<i class="grip"></i>';
    if (token === '##') return '<i class="grip far"></i>';
    const name = token.replace(/[!=,^]/g, '');
    const cls = (token.includes('=') ? ' checked' : '') + (token.includes(',') ? ' flyout' : '') + (token.includes('^') ? ' wide' : '');
    return `<button class="tool${cls}" aria-label="${name}"${token.includes('!') ? ' disabled' : ''}>${svg(name)}</button>`;
  }).join('');
});

const layers = [['0', '#fff'], ['Circles', '#0f0'], ['Defpoints', '#fff'], ['Dims', '#ff0'], ['ExplodedPoints', '#f0f'], ['HatchArea', '#0ff'], ['Shape', '#ff7f00'], ['Text', '#c0c0c0']];
document.getElementById('layers').innerHTML = layers.map(([name, color]) =>
  `<li><i style="background:${color}"></i><span>${name}</span><span>${name === 'Circles' ? svg('crayon') : ''}</span><span>${svg('eye')}</span><span>${svg('lock')}</span></li>`).join('');

document.querySelectorAll('[data-icon]').forEach((el) => { el.innerHTML = svg(el.dataset.icon); });

// Point grids: [first x, y, count]
const step = 59.35;
const rows = [[410, 346, 7], [380.5, 429, 8], [410, 512, 7], [380.5, 595, 8], [410, 678, 7], [380.5, 761, 8],
  [902.7, 346, 7], [950.2, 429, 7], [938.3, 512, 7], [926.4, 595, 7], [914.6, 678, 7], [902.7, 761, 7]];
document.getElementById('points').innerHTML = rows.map(([x, y, n]) =>
  Array.from({ length: n }, (_, i) => `<circle cx="${x + i * step}" cy="${y}" r="2"/>`).join('')).join('');

// Arrow heads: tip x, tip y, direction in degrees
const heads = [[223, 410.5, 180], [265, 410.5, 0], [158.5, 574, -90], [158.5, 639, 90], [226, 732.5, 180], [262, 732.5, 0],
  [411, 319.5, 180], [469, 319.5, 0], [346.5, 346, -90], [346.5, 428, 90], [410, 394.5, 0], [440, 394.5, 180],
  [903, 319.5, 180], [961, 319.5, 0], [874.5, 346, -90], [874.5, 428, 90], [938, 403.5, 0], [951, 403.5, 180]];
document.getElementById('arrows').innerHTML = heads.map(([x, y, a]) =>
  `<path transform="translate(${x} ${y}) rotate(${a})" d="M0 0L-12 -2.5V2.5Z"/>`).join('');
```
